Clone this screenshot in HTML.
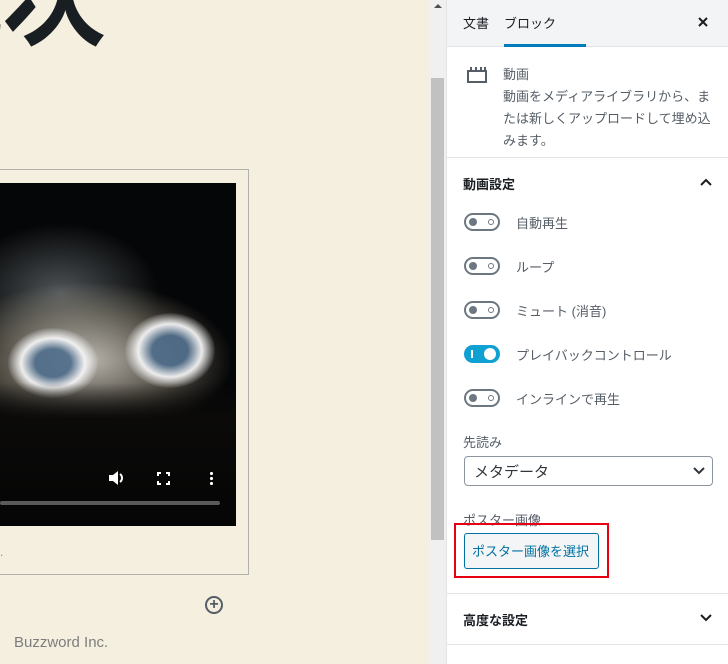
<!DOCTYPE html>
<html><head><meta charset="utf-8"><style>
*{margin:0;padding:0;box-sizing:border-box}
html,body{width:728px;height:664px;overflow:hidden}
body{background:#f5efe0;font-family:"Liberation Sans","Noto Sans CJK JP",sans-serif;position:relative}
.abs{position:absolute}
.side{left:446px;top:0;width:282px;height:664px;background:#fff;border-left:1px solid #e2e4e7;overflow:hidden}
.t{position:absolute;font-size:13px;color:#555d66;white-space:nowrap}
.tog{position:absolute;left:17px;width:36px;height:18px;border:2px solid #6c7781;border-radius:9px}
.tog:before{content:"";position:absolute;left:3px;top:3px;width:8px;height:8px;border-radius:50%;background:#6c7781}
.tog:after{content:"";position:absolute;right:4px;top:4px;width:6px;height:6px;border-radius:50%;border:1.5px solid #6c7781;box-sizing:border-box}
.hr{position:absolute;left:0;width:282px;height:1px;background:#e2e4e7}
</style></head><body>
<div class="abs" style="left:0;top:0;width:430px;height:664px;overflow:hidden">
<div class="abs" style="left:-102px;top:-50px;font-size:104px;font-weight:bold;color:#191e23;line-height:1;">説次</div>
<div class="abs" style="left:-2px;top:169px;width:251px;height:406px;border:1px solid #b1b1a9"></div>
<div class="abs" style="left:0;top:183px;width:236px;height:343px;background:#050607;overflow:hidden">
 <div class="abs" style="left:-40px;top:40px;width:200px;height:140px;background:radial-gradient(ellipse at center,rgba(150,160,165,.5),rgba(0,0,0,0) 70%)"></div>
 <div class="abs" style="left:-30px;top:100px;width:260px;height:140px;background:radial-gradient(ellipse at 45% 55%,rgba(230,225,215,.8),rgba(170,160,140,.45) 45%,rgba(0,0,0,0) 72%)"></div>
 <div class="abs" style="left:8px;top:145px;width:90px;height:70px;border-radius:50%;background:radial-gradient(ellipse,rgba(80,110,140,.9) 28%,rgba(245,245,245,.95) 50%,rgba(0,0,0,0) 72%)"></div>
 <div class="abs" style="left:125px;top:130px;width:90px;height:75px;border-radius:50%;background:radial-gradient(ellipse,rgba(80,110,140,.9) 28%,rgba(245,245,245,.95) 50%,rgba(0,0,0,0) 72%)"></div>
 <div class="abs" style="left:0;top:200px;width:236px;height:143px;background:linear-gradient(rgba(10,10,10,0),#0b0a09 25%,#050505)"></div>
 <svg class="abs" style="left:108px;top:287px" width="18" height="16" viewBox="0 0 18 16"><path d="M1 5h4l5-4v14l-5-4H1z" fill="#fff"/><path d="M12 4a5 5 0 0 1 0 8" fill="none" stroke="#fff" stroke-width="2"/></svg>
 <svg class="abs" style="left:157px;top:289px" width="13" height="13" viewBox="0 0 13 13"><path d="M1 4V1h3M9 1h3v3M12 9v3H9M4 12H1V9" fill="none" stroke="#fff" stroke-width="2"/></svg>
 <div class="abs" style="left:210px;top:288px;width:3px;height:14px;background:radial-gradient(circle,#fff 1.4px,transparent 1.8px) 0 0/3px 5px"></div>
 <div class="abs" style="left:0;top:318px;width:220px;height:4px;border-radius:2px;background:#5a5a5a"></div>
</div>
<div class="abs" style="left:0;top:545px;font-size:12px;color:#888">.</div>
<div class="abs" style="left:205px;top:596px;width:18px;height:18px;border:2px solid #555d66;border-radius:50%;text-align:center;line-height:13px;font-size:16px;font-weight:bold;color:#555d66">+</div>
<div class="abs" style="left:14px;top:634px;font-size:15px;color:#7d7d7d">Buzzword Inc.</div>
</div>
<div class="abs" style="left:430px;top:0;width:16px;height:664px;background:#f0f0f0"></div>
<div class="abs" style="left:431px;top:78px;width:13px;height:462px;background:#c1c1c1"></div>
<div class="abs" style="left:434px;top:4px;width:0;height:0;border-left:4px solid transparent;border-right:4px solid transparent;border-bottom:4px solid #505050"></div>
<div class="abs side">
 <div class="abs" style="left:0;top:0;width:281px;height:47px;background:#f3f4f5;border-bottom:1px solid #e2e4e7"></div>
 <div class="t" style="left:16px;top:13px;color:#191e23">文書</div>
 <div class="t" style="left:57px;top:13px;color:#191e23">ブロック</div>
 <div class="abs" style="left:57px;top:44px;width:82px;height:3px;background:#007cba"></div>
 <svg class="abs" style="left:251px;top:17px" width="10" height="10"><path d="M1 1l8 8M9 1l-8 8" stroke="#191e23" stroke-width="2"/></svg>
 <svg class="abs" style="left:19px;top:66px" width="22" height="18" viewBox="0 0 22 18"><path d="M2 5h18v11H2z" fill="none" stroke="#555d66" stroke-width="2"/><path d="M5 1v4M10 1v4M15 1v4M19 1v4" stroke="#555d66" stroke-width="2"/></svg>
 <div class="t" style="left:56px;top:64px;color:#555d66">動画</div>
 <div class="t" style="left:56px;top:86px;line-height:22px;white-space:normal;width:215px">動画をメディアライブラリから、または新しくアップロードして埋め込みます。</div>
 <div class="hr" style="top:157px"></div>
 <div class="t" style="left:16px;top:174px;color:#191e23;font-weight:bold">動画設定</div>
 <svg class="abs" style="left:252px;top:177px" width="14" height="10"><path d="M2 8l5-5 5 5" fill="none" stroke="#191e23" stroke-width="2"/></svg>
 <div class="tog" style="top:213px"></div><div class="t" style="left:69px;top:213px">自動再生</div>
 <div class="tog" style="top:257px"></div><div class="t" style="left:69px;top:257px">ループ</div>
 <div class="tog" style="top:301px"></div><div class="t" style="left:69px;top:301px">ミュート (消音)</div>
 <div class="abs" style="left:17px;top:345px;width:36px;height:18px;border-radius:9px;background:#11a0d2"><div class="abs" style="left:7px;top:5px;width:2px;height:8px;background:#fff"></div><div class="abs" style="left:20px;top:3px;width:12px;height:12px;border-radius:50%;background:#fff"></div></div>
 <div class="t" style="left:69px;top:345px">プレイバックコントロール</div>
 <div class="tog" style="top:389px"></div><div class="t" style="left:69px;top:389px">インラインで再生</div>
 <div class="t" style="left:16px;top:432px">先読み</div>
 <div class="abs" style="left:17px;top:456px;width:249px;height:30px;border:1px solid #8d96a0;border-radius:4px"></div>
 <div class="t" style="left:27px;top:461px;font-size:15px;color:#32373c">メタデータ</div>
 <svg class="abs" style="left:245px;top:466px" width="14" height="10"><path d="M2 2l5 5 5-5" fill="none" stroke="#32373c" stroke-width="2"/></svg>
 <div class="t" style="left:16px;top:510px">ポスター画像</div>
 <div class="abs" style="left:17px;top:533px;width:135px;height:36px;border:1px solid #0071a1;border-radius:3px;background:#f3f5f6"></div>
 <div class="t" style="left:25px;top:541px;color:#0071a1">ポスター画像を選択</div>
 <div class="abs" style="left:7px;top:523px;width:155px;height:55px;border:2px solid #e60012"></div>
 <div class="hr" style="top:593px"></div>
 <div class="t" style="left:16px;top:610px;color:#191e23;font-weight:bold">高度な設定</div>
 <svg class="abs" style="left:252px;top:613px" width="14" height="10"><path d="M2 2l5 5 5-5" fill="none" stroke="#191e23" stroke-width="2"/></svg>
 <div class="hr" style="top:644px"></div>
</div>
</body></html>
